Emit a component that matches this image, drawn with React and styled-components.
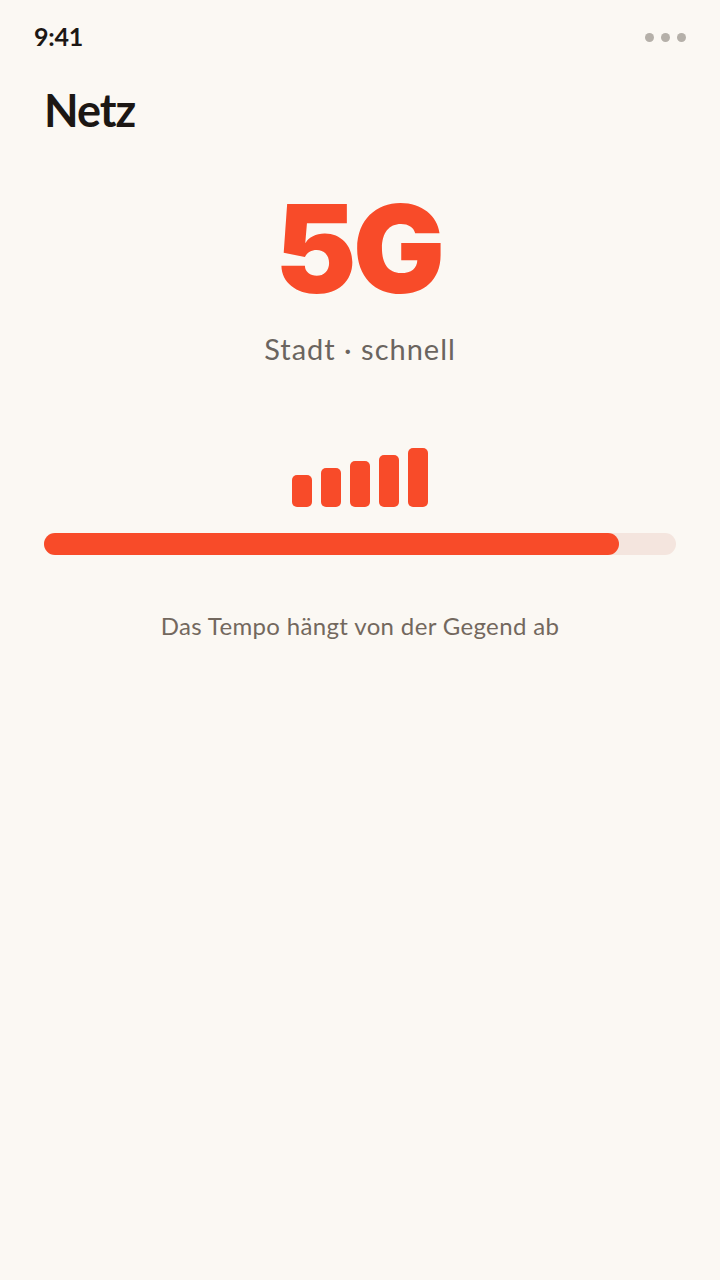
import React from "react";
import styled, { createGlobalStyle } from "styled-components";

const Global = createGlobalStyle`
	html, body { margin: 0; padding: 0; background: #fbf8f3; }
	* { box-sizing: border-box; }
`;

const Screen = styled.div`
	width: 720px;
	height: 1280px;
	background: #fbf8f3;
	font-family: "Lato", "Noto Sans", sans-serif;
	display: flex;
	flex-direction: column;
`;

const StatusBar = styled.div`
	height: 74px;
	padding: 0 34px;
	display: flex;
	align-items: center;
	justify-content: space-between;
`;

const Time = styled.div`
	font-size: 25px;
	line-height: 28px;
	margin-top: -2px;
	font-weight: 700;
	letter-spacing: -0.2px;
	color: #1c1714;
`;

const Dots = styled.div`
	display: flex;
	gap: 7px;
`;

const Dot = styled.span`
	width: 9px;
	height: 9px;
	border-radius: 50%;
	background: #b5b0a9;
`;

const Title = styled.h1`
	margin: 0;
	padding: 0 44px;
	font-size: 45px;
	line-height: 72px;
	font-weight: 700;
	letter-spacing: -1px;
	color: #1c1714;
`;

const Hero = styled.div`
	font-family: "Inter", sans-serif;
	margin-top: 39px;
	padding-right: 3px;
	text-align: center;
	font-size: 122px;
	line-height: 128px;
	font-weight: 900;
	letter-spacing: -3.5px;
	color: #f84b29;
`;

const Sub = styled.div`
	margin-top: 18px;
	text-align: center;
	font-size: 29px;
	line-height: 36px;
	letter-spacing: 1px;
	color: #6b655f;
`;

const Bars = styled.div`
	margin-top: 81px;
	display: flex;
	justify-content: center;
	align-items: flex-end;
	gap: 9px;
`;

const Bar = styled.div`
	width: 20px;
	height: ${({ $h }) => $h}px;
	border-radius: 5px;
	background: #f84b29;
`;

const Track = styled.div`
	margin: 26px 44px 0;
	height: 22px;
	border-radius: 11px;
	background: #f4e5de;
`;

const Fill = styled.div`
	height: 100%;
	border-radius: 11px;
	background: #f84b29;
`;

const Note = styled.div`
	margin-top: 55px;
	text-align: center;
	font-size: 24px;
	line-height: 32px;
	letter-spacing: 0.35px;
	color: #73685e;
`;

export default function App() {
	return (
		<Screen>
			<Global />
			<StatusBar>
				<Time>9:41</Time>
				<Dots>
					<Dot />
					<Dot />
					<Dot />
				</Dots>
			</StatusBar>
			<Title>Netz</Title>
			<Hero>5G</Hero>
			<Sub>Stadt · schnell</Sub>
			<Bars>
				{[32, 39, 46, 52, 59].map((h) => (
					<Bar key={h} $h={h} />
				))}
			</Bars>
			<Track>
				<Fill style={{ width: "91%" }} />
			</Track>
			<Note>Das Tempo hängt von der Gegend ab</Note>
		</Screen>
	);
}
